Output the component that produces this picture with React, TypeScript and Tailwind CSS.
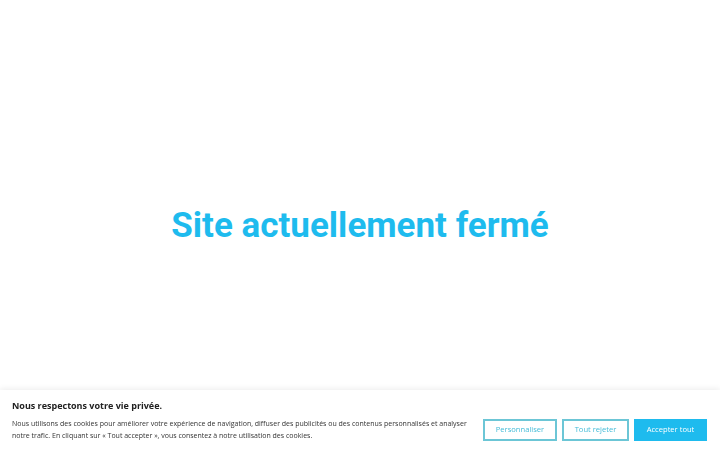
const App = () => {
  return (
    <div className="relative min-h-screen bg-white">
      {/* Closed notice */}
      <main className="flex min-h-screen items-center justify-center">
        <h1 className="font-['Roboto',sans-serif] text-[35px] font-bold leading-none text-[#1ebbee]">
          Site actuellement fermé
        </h1>
      </main>

      {/* Cookie banner */}
      <div className="fixed inset-x-0 bottom-0 h-[60px] bg-white pl-3 pr-[13px] pt-[9px] font-['Open_Sans',sans-serif] shadow-[0_-1px_6px_rgba(0,0,0,0.08)]">
        <p className="text-[9px] font-bold leading-[13px] text-[#212121]">
          Nous respectons votre vie privée.
        </p>
        <div className="mt-[6px] flex items-start justify-between">
          <p className="w-[462px] text-[7px] leading-[12px] text-[#333333]">
            Nous utilisons des cookies pour améliorer votre expérience de navigation, diffuser des publicités ou des contenus personnalisés et analyser notre trafic. En cliquant sur « Tout accepter », vous consentez à notre utilisation des cookies.
          </p>
          <div className="mt-[1px] flex gap-[5px]">
            <button className="h-[22px] w-[74px] border-2 border-[#6cc6d6] text-[7.6px] font-medium text-[#45bcd8]">
              Personnaliser
            </button>
            <button className="h-[22px] w-[67px] border-2 border-[#6cc6d6] text-[7.6px] font-medium text-[#45bcd8]">
              Tout rejeter
            </button>
            <button className="h-[22px] w-[73px] border-2 border-[#1ebbee] bg-[#1ebbee] text-[7.6px] font-medium text-white">
              Accepter tout
            </button>
          </div>
        </div>
      </div>
    </div>
  );
};

export default App;
